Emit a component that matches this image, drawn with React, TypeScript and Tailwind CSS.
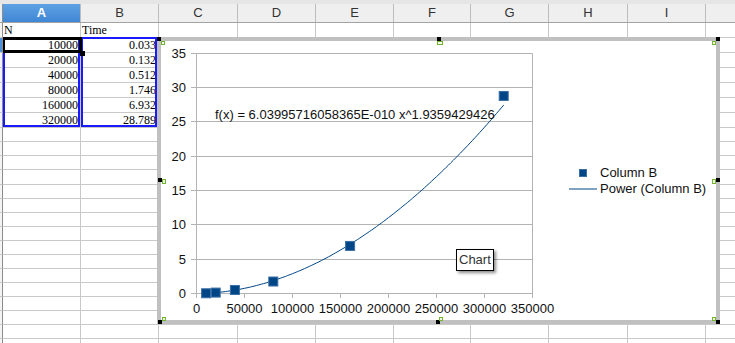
import type { ReactNode } from "react";

// column widths include the 1px right border
const COLS = [
  { name: "A", w: "w-[78px]" },
  { name: "B", w: "w-[78px]" },
  { name: "C", w: "w-[79px]" },
  { name: "D", w: "w-[78px]" },
  { name: "E", w: "w-[78px]" },
  { name: "F", w: "w-[77px]" },
  { name: "G", w: "w-[78px]" },
  { name: "H", w: "w-[79px]" },
  { name: "I", w: "w-[78px]" },
  { name: "", w: "w-[78px]" },
];

const DATA: [string, string][] = [
  ["N", "Time"],
  ["10000", "0.033"],
  ["20000", "0.132"],
  ["40000", "0.512"],
  ["80000", "1.746"],
  ["160000", "6.932"],
  ["320000", "28.789"],
];

const LOWER_ROWS = ["h-[14px]", "h-[14px]", "h-[14px]", "h-[15px]", "h-[14px]", "h-[14px]", "h-[14px]", "h-[14px]", "h-[14px]", "h-[14px]", "h-[14px]", "h-[14px]", "h-[14px]", "h-[14px]", "h-[14px]", "h-[14px]"];

const POINTS: [number, number][] = [
  [10000, 0.033],
  [20000, 0.132],
  [40000, 0.512],
  [80000, 1.746],
  [160000, 6.932],
  [320000, 28.789],
];

const COEF = 6.03995716058365e-10;
const EXP = 1.9359429426;
const SERIES = "#004586";

const px = (v: number) => 35.5 + v * 0.00096;
const py = (t: number) => 252.5 - t * 6.862;

function Row({ h, selected, children }: { h: string; selected?: boolean; children: (i: number) => ReactNode }) {
  return (
    <div className={`flex ${h}`}>
      <div className={`w-[3px] shrink-0 border-r border-b border-r-[#8c8c8c] border-b-[#c9c9c9] ${selected ? "bg-[#4a8fd8]" : "bg-[#f4f4f4]"}`} />
      {COLS.map((c, i) => (
        <div key={i} className={`${c.w} shrink-0 border-r border-b border-[#c9c9c9] overflow-hidden`}>
          {children(i)}
        </div>
      ))}
      <div className="flex-1 border-b border-[#c9c9c9]" />
    </div>
  );
}

function Chart() {
  const trend: string[] = [];
  for (let x = 10000; x <= 320000; x += 2500) {
    trend.push(`${px(x).toFixed(1)},${py(COEF * x ** EXP).toFixed(1)}`);
  }
  const grid = [0, 5, 10, 15, 20, 25, 30, 35];
  const xticks = [0, 50000, 100000, 150000, 200000, 250000, 300000, 350000];

  return (
    <svg width="555" height="279" className="block">
      {/* horizontal gridlines */}
      {grid.map((g) => {
        const y = Math.round(py(g) - 0.5) + 0.5;
        return (
          <g key={g}>
            <line x1="30" x2="371.5" y1={y} y2={y} stroke="#b3b3b3" />
            <text x="25" y={y + 4.5} fontSize="13" textAnchor="end" fill="#111">
              {g}
            </text>
          </g>
        );
      })}
      <line x1="35.5" x2="35.5" y1="12.5" y2="257" stroke="#b3b3b3" />
      <line x1="371.5" x2="371.5" y1="12.5" y2="257" stroke="#b3b3b3" />
      {xticks.map((v) => {
        const x = Math.round(px(v) - 0.5) + 0.5;
        return (
          <g key={v}>
            <line x1={x} x2={x} y1="252.5" y2="257" stroke="#b3b3b3" />
            <text x={x} y="272" fontSize="13" textAnchor="middle" fill="#111">
              {v}
            </text>
          </g>
        );
      })}

      {/* trend line */}
      <polyline points={trend.join(" ")} fill="none" stroke={SERIES} strokeWidth="1" />

      {/* data points */}
      {POINTS.map(([x, t]) => (
        <rect key={x} x={px(x) - 4.5} y={py(t) - 4.5} width="9" height="9" fill={SERIES} stroke="#3a6ea6" strokeWidth="1" />
      ))}

      <text x="54" y="77.5" fontSize="13" fill="#111">
        f(x) = 6.03995716058365E-010 x^1.9359429426
      </text>

      {/* legend */}
      <rect x="418.5" y="128.5" width="7" height="7" fill={SERIES} stroke="#3a6ea6" />
      <text x="439" y="135.7" fontSize="13" fill="#111">
        Column B
      </text>
      <line x1="408" x2="436" y1="148" y2="148" stroke={SERIES} />
      <text x="439" y="151.5" fontSize="13" fill="#111">
        Power (Column B)
      </text>
    </svg>
  );
}

const BLACK = "absolute w-[4px] h-[4px] bg-black";
const GREEN = "absolute w-[4px] h-[4px] border border-[#74b530] bg-[#f4fbe9]";

export default function App() {
  return (
    <div className="relative w-[735px] h-[343px] overflow-hidden bg-white font-['Liberation_Sans',sans-serif] text-black">
      {/* top strip */}
      <div className="h-[4px] bg-[#e6e6e6]" />

      {/* column headers */}
      <div className="flex h-[19px] border-b border-[#a3a3a3] bg-[#efefef]">
        <div className="w-[3px] shrink-0 border-r border-[#8c8c8c]" />
        {COLS.map((c, i) => (
          <div
            key={i}
            className={`${c.w} shrink-0 border-r border-[#bdbdbd] flex items-center justify-center text-[13px] ${
              i === 0 ? "bg-gradient-to-b from-[#5fa1e4] to-[#3f86d4] text-white font-bold" : "text-[#333]"
            }`}
          >
            {c.name}
          </div>
        ))}
        <div className="flex-1" />
      </div>

      {/* data rows */}
      <div className="font-['Liberation_Serif',serif] text-[12px] leading-[14px]">
        {DATA.map(([a, b], r) => (
          <Row key={r} h="h-[15px]" selected={r === 1}>
            {(i) =>
              i === 0 ? (
                <div className={r === 0 ? "pl-[1px]" : "pr-[2px] text-right"}>{a}</div>
              ) : i === 1 ? (
                <div className={r === 0 ? "pl-[1px]" : "pr-[2px] text-right"}>{b}</div>
              ) : null
            }
          </Row>
        ))}
        {LOWER_ROWS.map((h, r) => (
          <Row key={`l${r}`} h={h}>
            {() => null}
          </Row>
        ))}
      </div>

      {/* data range highlight */}
      <div className="absolute left-[3px] top-[37px] w-[77px] h-[90px] border-2 border-[#1a1aff]" />
      <div className="absolute left-[81px] top-[37px] w-[76px] h-[90px] border-2 border-[#1a1aff]" />

      {/* cell cursor */}
      <div className="absolute left-[3px] top-[37px] w-[79px] h-[16px] border-[3px] border-l-2 border-black" />
      <div className="absolute left-[80px] top-[51px] w-[5px] h-[5px] bg-black" />

      {/* chart object */}
      <div className="absolute left-[157px] top-[37px] w-[563px] h-[287px] border-4 border-[#c0c0c0] bg-white">
        <Chart />
      </div>

      {/* selection handles */}
      <div className={`${BLACK} left-[157px] top-[37px]`} />
      <div className={`${GREEN} left-[161px] top-[41px]`} />
      <div className={`${BLACK} left-[437px] top-[37px]`} />
      <div className={`${GREEN} left-[437px] top-[41px] w-[6px]`} />
      <div className={`${BLACK} left-[716px] top-[37px]`} />
      <div className={`${GREEN} left-[712px] top-[41px]`} />
      <div className={`${BLACK} left-[158px] top-[178px]`} />
      <div className={`${GREEN} left-[162px] top-[179px] h-[5px]`} />
      <div className={`${BLACK} left-[716px] top-[178px]`} />
      <div className={`${GREEN} left-[712px] top-[179px] h-[5px]`} />
      <div className={`${BLACK} left-[158px] top-[320px]`} />
      <div className={`${GREEN} left-[162px] top-[317px]`} />
      <div className={`${BLACK} left-[436px] top-[320px]`} />
      <div className={`${GREEN} left-[439px] top-[317px]`} />
      <div className={`${BLACK} left-[716px] top-[320px]`} />
      <div className={`${GREEN} left-[712px] top-[317px]`} />

      {/* tooltip */}
      <div className="absolute left-[456px] top-[249px] w-[38px] h-[22px] border border-black bg-white shadow-[2px_2px_3px_rgba(0,0,0,0.45)] flex items-center pl-[2px] text-[13px] text-[#333]">
        Chart
      </div>
    </div>
  );
}
